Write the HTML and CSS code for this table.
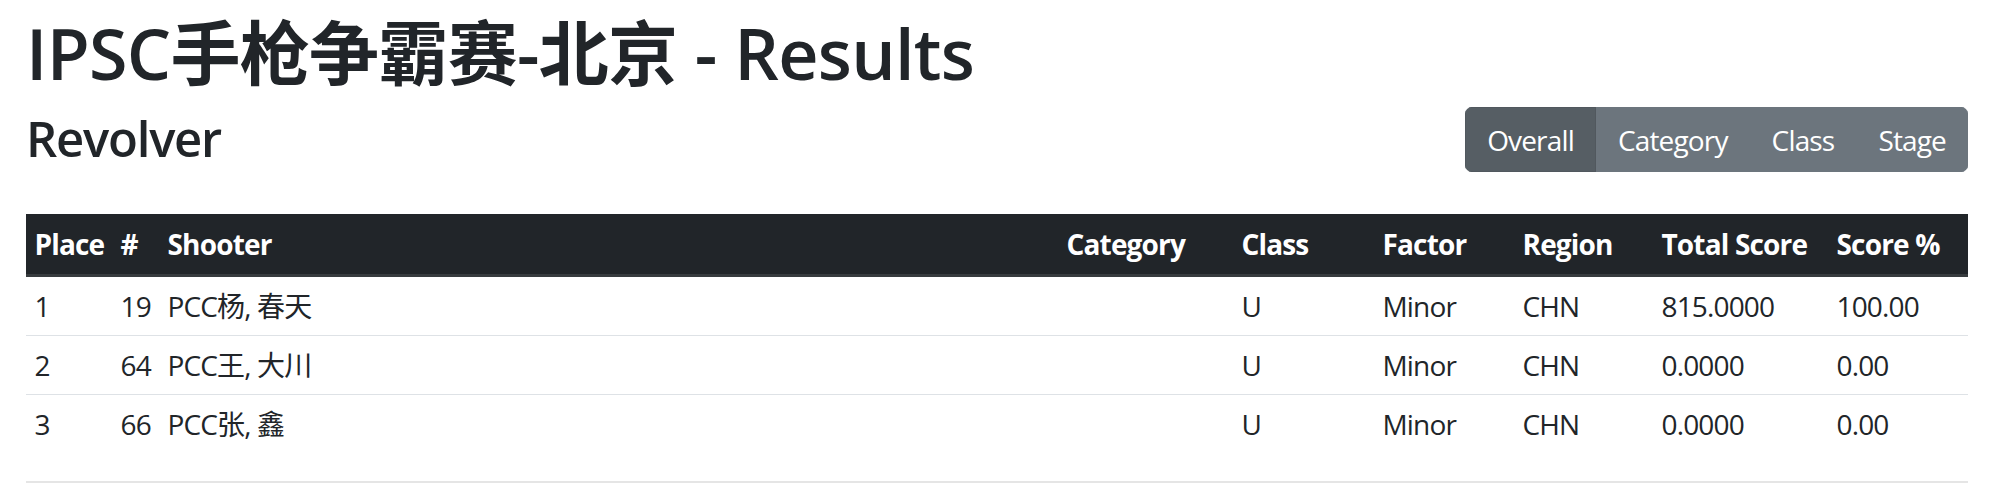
FILE: index.html
```html
<!DOCTYPE html>
<html lang="zh-CN">
<head>
<meta charset="utf-8">
<title>IPSC手枪争霸赛-北京 - Results</title>
<link rel="stylesheet" href="styles.css">
</head>
<body>
<div class="page">
  <h1 class="title">IPSC手枪争霸赛-北京 - Results</h1>
  <div class="subhead">
    <h3 class="division">Revolver</h3>
    <div class="btn-group">
      <a class="btn active">Overall</a>
      <a class="btn">Category</a>
      <a class="btn">Class</a>
      <a class="btn">Stage</a>
    </div>
  </div>
  <table class="results">
    <colgroup>
      <col class="c-place"><col class="c-num"><col class="c-shooter"><col class="c-cat"><col class="c-class"><col class="c-factor"><col class="c-region"><col class="c-total"><col class="c-pct">
    </colgroup>
    <thead>
      <tr><th>Place</th><th>#</th><th>Shooter</th><th>Category</th><th>Class</th><th>Factor</th><th>Region</th><th>Total Score</th><th>Score %</th></tr>
    </thead>
    <tbody>
      <tr><td>1</td><td>19</td><td>PCC杨, 春天</td><td></td><td>U</td><td>Minor</td><td>CHN</td><td>815.0000</td><td>100.00</td></tr>
      <tr><td>2</td><td>64</td><td>PCC王, 大川</td><td></td><td>U</td><td>Minor</td><td>CHN</td><td>0.0000</td><td>0.00</td></tr>
      <tr><td>3</td><td>66</td><td>PCC张, 鑫</td><td></td><td>U</td><td>Minor</td><td>CHN</td><td>0.0000</td><td>0.00</td></tr>
    </tbody>
  </table>
  <hr class="rule">
</div>
</body>
</html>
```
FILE: styles.css
```css
html, body {
  margin: 0;
  padding: 0;
  background: #fff;
}
body {
  font-family: "Open Sans", "Noto Sans CJK SC", sans-serif;
  color: #212529;
  font-size: 28px;
  line-height: 42px;
}
.page {
  padding: 11px 46px 0 26px;
}
.title {
  margin: 0 0 14px 0;
  font-size: 70px;
  line-height: 84px;
  font-weight: 600;
  letter-spacing: -0.01em;
}
.subhead {
  display: flex;
  justify-content: space-between;
  align-items: flex-start;
  margin-bottom: 42px;
}
.division {
  margin: 0;
  font-size: 49px;
  line-height: 59px;
  font-weight: 600;
  letter-spacing: -0.025em;
}
.btn-group {
  display: flex;
  margin-top: -2px;
  border-radius: 7px;
  overflow: hidden;
}
.btn {
  display: block;
  padding: 10.5px 21px;
  border: 1px solid #6c757d;
  background: #6c757d;
  color: #fff;
  font-size: 28px;
  line-height: 42px;
  letter-spacing: -0.03em;
}
.btn.active {
  background: #565e64;
  border-color: #51585e;
}
.results {
  width: 100%;
  border-collapse: collapse;
  table-layout: fixed;
}
.c-place { width: 86px; }
.c-num { width: 47px; }
.c-shooter { width: 899px; }
.c-cat { width: 175px; }
.c-class { width: 141px; }
.c-factor { width: 140px; }
.c-region { width: 139px; }
.c-total { width: 175px; }
.c-pct { width: 140px; }
.results th,
.results td {
  padding: 8px 8px 8px 8.5px;
  text-align: left;
  vertical-align: top;
  white-space: nowrap;
  letter-spacing: -0.03em;
}
.results th {
  padding-bottom: 9px;
  background: #212529;
  color: #fff;
  font-weight: 700;
  border-top: 1px solid #212529;
  border-bottom: 3px solid #373b3e;
}
.results td {
  border-top: 1px solid #dee2e6;
  font-weight: 400;
}
.rule {
  margin: 28px 0 0 0;
  border: 0;
  border-top: 2px solid rgba(0, 0, 0, 0.1);
  height: 0;
}
```
